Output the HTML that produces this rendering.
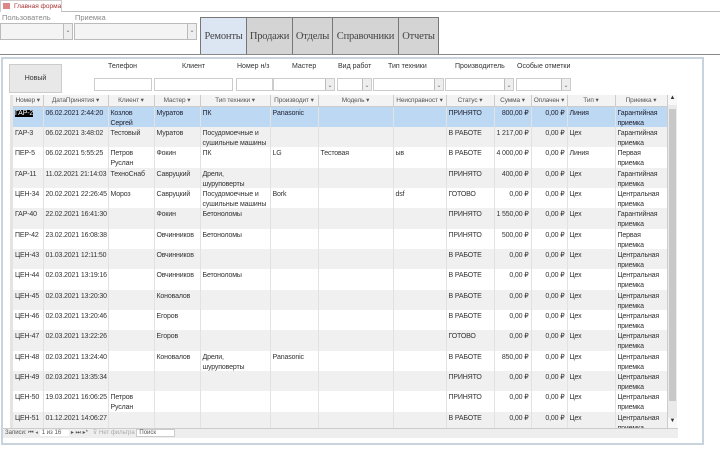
<!DOCTYPE html><html><head><meta charset="utf-8"><style>
*{box-sizing:border-box;margin:0;padding:0}
body{width:720px;height:462px;background:#fff;font-family:"Liberation Sans",sans-serif;font-size:7px;color:#333;position:relative;overflow:hidden}
.a{position:absolute}
.lbl{color:#888;font-size:7.5px}
.cb{border:1px solid #bbb;background:#f4f4f4}
.dd{position:absolute;right:0;top:0;bottom:0;width:9px;border-left:1px solid #bbb;background:#eee;font-size:6px;text-align:center;line-height:15px;color:#666}
.tab{position:absolute;top:17px;height:37px;border:1px solid #777;border-bottom:none;background:#d4d4d4;font-family:"Liberation Serif",serif;font-size:10.5px;color:#444;text-align:center;line-height:38px;white-space:nowrap;overflow:hidden;letter-spacing:-0.2px}
.in{position:absolute;top:78px;height:13px;border:1px solid #ccc;background:#fff}
.fl{position:absolute;top:63px;font-size:7px;color:#333}
table{border-collapse:collapse;table-layout:fixed}
td{vertical-align:top;padding:0;border-right:1px solid #e2e2e2;overflow:hidden}
td>div{height:20.35px;padding:2px 2px 0;line-height:10px;overflow:hidden;white-space:nowrap;letter-spacing:-0.15px}
td.w>div{white-space:normal}
td.r>div{text-align:right}
tr.g td{background:#f0f0f0}
tr.s td{background:#bcd8f2;color:#223}
th{font-weight:normal;height:11px;background:#f3f3f3;border-right:1px solid #ccc;border-bottom:1px solid #ccc;font-size:6.5px;color:#555;white-space:nowrap;overflow:hidden;text-align:center;letter-spacing:-0.1px}
</style></head><body>
<div class="a" style="left:0;top:0;width:62px;height:12px;border:1px solid #ccc;border-bottom:none;font-size:6.5px;color:#a33;padding:2px 0 0 13px;white-space:nowrap">Главная форма</div>
<div class="a" style="left:3px;top:3px;width:7px;height:6px;background:#d88"></div>
<div class="a" style="left:62px;top:11px;width:658px;height:1px;background:#bbb"></div>
<div class="a lbl" style="left:2px;top:13px">Пользователь</div>
<div class="a lbl" style="left:75px;top:13px">Приемка</div>
<div class="a cb" style="left:0;top:23px;width:73px;height:17px"><div class="dd">⌄</div></div>
<div class="a cb" style="left:74px;top:23px;width:123px;height:17px"><div class="dd">⌄</div></div>
<div class="tab" style="left:200px;width:47px;background:#dce6f2">Ремонты</div>
<div class="tab" style="left:246px;width:47px">Продажи</div>
<div class="tab" style="left:292px;width:41px">Отделы</div>
<div class="tab" style="left:332px;width:67px">Справочники</div>
<div class="tab" style="left:398px;width:41px">Отчеты</div>
<div class="a" style="left:0;top:54px;width:720px;height:1px;background:#888"></div>
<div class="a" style="left:1px;top:57px;width:703px;height:388px;border:2px solid #c9d3de;background:#fff"></div>
<div class="a" style="left:9px;top:64px;width:53px;height:29px;background:#e8e8e8;border:1px solid #ccc;text-align:center;line-height:28px;font-size:7px">Новый</div>
<div class="fl" style="left:108px">Телефон</div>
<div class="fl" style="left:182px">Клиент</div>
<div class="fl" style="left:237px">Номер н/з</div>
<div class="fl" style="left:292px">Мастер</div>
<div class="fl" style="left:338px">Вид работ</div>
<div class="fl" style="left:388px">Тип техники</div>
<div class="fl" style="left:455px">Производитель</div>
<div class="fl" style="left:517px">Особые отметки</div>
<div class="in" style="left:94px;width:58px"></div>
<div class="in" style="left:154px;width:79px"></div>
<div class="in" style="left:236px;width:37px"></div>
<div class="in" style="left:273px;width:62px"><div class="dd">⌄</div></div>
<div class="in" style="left:337px;width:35px"><div class="dd">⌄</div></div>
<div class="in" style="left:373px;width:71px"><div class="dd">⌄</div></div>
<div class="in" style="left:445px;width:69px"><div class="dd">⌄</div></div>
<div class="in" style="left:516px;width:55px"><div class="dd">⌄</div></div>
<div class="a" style="left:10px;top:95px;width:3px;height:333px;background:#e4e4e4"></div>
<div class="a" style="left:667px;top:95px;width:10px;height:333px;background:#eaeaea;border-left:1px solid #ccc"><div style="height:10px;font-size:6px;text-align:center;background:#f8f8f8">▲</div><div style="position:absolute;top:14px;left:1px;width:7px;height:292px;background:#c8c8c8"></div><div style="position:absolute;bottom:0;height:10px;width:9px;font-size:6px;text-align:center;background:#f8f8f8">▼</div></div>
<div class="a" style="left:13px;top:95px;width:654px;height:333px;overflow:hidden">
<table style="width:654px">
<colgroup><col style="width:30px"><col style="width:65px"><col style="width:46px"><col style="width:46px"><col style="width:70px"><col style="width:48px"><col style="width:75px"><col style="width:53px"><col style="width:48px"><col style="width:37px"><col style="width:36px"><col style="width:48px"><col style="width:52px"></colgroup>
<tr><th>Номер ▾</th><th>ДатаПринятия ▾</th><th>Клиент ▾</th><th>Мастер ▾</th><th>Тип техники ▾</th><th>Производит ▾</th><th>Модель ▾</th><th>Неисправност ▾</th><th>Статус ▾</th><th>Сумма ▾</th><th>Оплачен ▾</th><th>Тип ▾</th><th>Приемка ▾</th></tr>
<tr class="s"><td><div><span style="background:#000;color:#fff">ГАР-2</span></div></td><td><div>06.02.2021 2:44:20</div></td><td class="w"><div>Козлов Сергей</div></td><td><div>Муратов</div></td><td><div>ПК</div></td><td><div>Panasonic</div></td><td><div></div></td><td><div></div></td><td><div>ПРИНЯТО</div></td><td class="r"><div>800,00 ₽</div></td><td class="r"><div>0,00 ₽</div></td><td><div>Линия</div></td><td class="w"><div>Гарантийная приемка</div></td></tr>
<tr class="g"><td><div>ГАР-3</div></td><td><div>06.02.2021 3:48:02</div></td><td><div>Тестовый</div></td><td><div>Муратов</div></td><td class="w"><div>Посудомоечные и сушильные машины</div></td><td><div></div></td><td><div></div></td><td><div></div></td><td><div>В РАБОТЕ</div></td><td class="r"><div>1 217,00 ₽</div></td><td class="r"><div>0,00 ₽</div></td><td><div>Цех</div></td><td class="w"><div>Гарантийная приемка</div></td></tr>
<tr><td><div>ПЕР-5</div></td><td><div>06.02.2021 5:55:25</div></td><td class="w"><div>Петров Руслан</div></td><td><div>Фокин</div></td><td><div>ПК</div></td><td><div>LG</div></td><td><div>Тестовая</div></td><td><div>ыв</div></td><td><div>В РАБОТЕ</div></td><td class="r"><div>4 000,00 ₽</div></td><td class="r"><div>0,00 ₽</div></td><td><div>Линия</div></td><td class="w"><div>Первая приемка</div></td></tr>
<tr class="g"><td><div>ГАР-11</div></td><td><div>11.02.2021 21:14:03</div></td><td><div>ТехноСнаб</div></td><td><div>Савруцкий</div></td><td class="w"><div>Дрели, шуруповерты</div></td><td><div></div></td><td><div></div></td><td><div></div></td><td><div>ПРИНЯТО</div></td><td class="r"><div>400,00 ₽</div></td><td class="r"><div>0,00 ₽</div></td><td><div>Цех</div></td><td class="w"><div>Гарантийная приемка</div></td></tr>
<tr><td><div>ЦЕН-34</div></td><td><div>20.02.2021 22:26:45</div></td><td><div>Мороз</div></td><td><div>Савруцкий</div></td><td class="w"><div>Посудомоечные и сушильные машины</div></td><td><div>Bork</div></td><td><div></div></td><td><div>dsf</div></td><td><div>ГОТОВО</div></td><td class="r"><div>0,00 ₽</div></td><td class="r"><div>0,00 ₽</div></td><td><div>Цех</div></td><td class="w"><div>Центральная приемка</div></td></tr>
<tr class="g"><td><div>ГАР-40</div></td><td><div>22.02.2021 16:41:30</div></td><td><div></div></td><td><div>Фокин</div></td><td><div>Бетоноломы</div></td><td><div></div></td><td><div></div></td><td><div></div></td><td><div>ПРИНЯТО</div></td><td class="r"><div>1 550,00 ₽</div></td><td class="r"><div>0,00 ₽</div></td><td><div>Цех</div></td><td class="w"><div>Гарантийная приемка</div></td></tr>
<tr><td><div>ПЕР-42</div></td><td><div>23.02.2021 16:08:38</div></td><td><div></div></td><td><div>Овчинников</div></td><td><div>Бетоноломы</div></td><td><div></div></td><td><div></div></td><td><div></div></td><td><div>ПРИНЯТО</div></td><td class="r"><div>500,00 ₽</div></td><td class="r"><div>0,00 ₽</div></td><td><div>Цех</div></td><td class="w"><div>Первая приемка</div></td></tr>
<tr class="g"><td><div>ЦЕН-43</div></td><td><div>01.03.2021 12:11:50</div></td><td><div></div></td><td><div>Овчинников</div></td><td><div></div></td><td><div></div></td><td><div></div></td><td><div></div></td><td><div>В РАБОТЕ</div></td><td class="r"><div>0,00 ₽</div></td><td class="r"><div>0,00 ₽</div></td><td><div>Цех</div></td><td class="w"><div>Центральная приемка</div></td></tr>
<tr><td><div>ЦЕН-44</div></td><td><div>02.03.2021 13:19:16</div></td><td><div></div></td><td><div>Овчинников</div></td><td><div>Бетоноломы</div></td><td><div></div></td><td><div></div></td><td><div></div></td><td><div>В РАБОТЕ</div></td><td class="r"><div>0,00 ₽</div></td><td class="r"><div>0,00 ₽</div></td><td><div>Цех</div></td><td class="w"><div>Центральная приемка</div></td></tr>
<tr class="g"><td><div>ЦЕН-45</div></td><td><div>02.03.2021 13:20:30</div></td><td><div></div></td><td><div>Коновалов</div></td><td><div></div></td><td><div></div></td><td><div></div></td><td><div></div></td><td><div>В РАБОТЕ</div></td><td class="r"><div>0,00 ₽</div></td><td class="r"><div>0,00 ₽</div></td><td><div>Цех</div></td><td class="w"><div>Центральная приемка</div></td></tr>
<tr><td><div>ЦЕН-46</div></td><td><div>02.03.2021 13:20:46</div></td><td><div></div></td><td><div>Егоров</div></td><td><div></div></td><td><div></div></td><td><div></div></td><td><div></div></td><td><div>В РАБОТЕ</div></td><td class="r"><div>0,00 ₽</div></td><td class="r"><div>0,00 ₽</div></td><td><div>Цех</div></td><td class="w"><div>Центральная приемка</div></td></tr>
<tr class="g"><td><div>ЦЕН-47</div></td><td><div>02.03.2021 13:22:26</div></td><td><div></div></td><td><div>Егоров</div></td><td><div></div></td><td><div></div></td><td><div></div></td><td><div></div></td><td><div>ГОТОВО</div></td><td class="r"><div>0,00 ₽</div></td><td class="r"><div>0,00 ₽</div></td><td><div>Цех</div></td><td class="w"><div>Центральная приемка</div></td></tr>
<tr><td><div>ЦЕН-48</div></td><td><div>02.03.2021 13:24:40</div></td><td><div></div></td><td><div>Коновалов</div></td><td class="w"><div>Дрели, шуруповерты</div></td><td><div>Panasonic</div></td><td><div></div></td><td><div></div></td><td><div>В РАБОТЕ</div></td><td class="r"><div>850,00 ₽</div></td><td class="r"><div>0,00 ₽</div></td><td><div>Цех</div></td><td class="w"><div>Центральная приемка</div></td></tr>
<tr class="g"><td><div>ЦЕН-49</div></td><td><div>02.03.2021 13:35:34</div></td><td><div></div></td><td><div></div></td><td><div></div></td><td><div></div></td><td><div></div></td><td><div></div></td><td><div>ПРИНЯТО</div></td><td class="r"><div>0,00 ₽</div></td><td class="r"><div>0,00 ₽</div></td><td><div>Цех</div></td><td class="w"><div>Центральная приемка</div></td></tr>
<tr><td><div>ЦЕН-50</div></td><td><div>19.03.2021 16:06:25</div></td><td class="w"><div>Петров Руслан</div></td><td><div></div></td><td><div></div></td><td><div></div></td><td><div></div></td><td><div></div></td><td><div>ПРИНЯТО</div></td><td class="r"><div>0,00 ₽</div></td><td class="r"><div>0,00 ₽</div></td><td><div>Цех</div></td><td class="w"><div>Центральная приемка</div></td></tr>
<tr class="g"><td><div>ЦЕН-51</div></td><td><div>01.12.2021 14:06:27</div></td><td><div></div></td><td><div></div></td><td><div></div></td><td><div></div></td><td><div></div></td><td><div></div></td><td><div>В РАБОТЕ</div></td><td class="r"><div>0,00 ₽</div></td><td class="r"><div>0,00 ₽</div></td><td><div>Цех</div></td><td class="w"><div>Центральная приемка</div></td></tr>
</table></div>
<div class="a" style="left:3px;top:428px;width:675px;height:10px;background:#eee;border-top:1px solid #ccc;font-size:6px;color:#555;line-height:9px;padding-left:2px;white-space:nowrap">Записи: ⏮ ◂ <span style="background:#fff;padding:0 8px 0 2px">1 из 16</span> ▸ ⏭ ▸* &nbsp; <span style="color:#aaa">⊽ Нет фильтра</span> <span style="background:#fff;border:1px solid #ccc;padding:0 18px 0 2px">Поиск</span></div>
</body></html>
